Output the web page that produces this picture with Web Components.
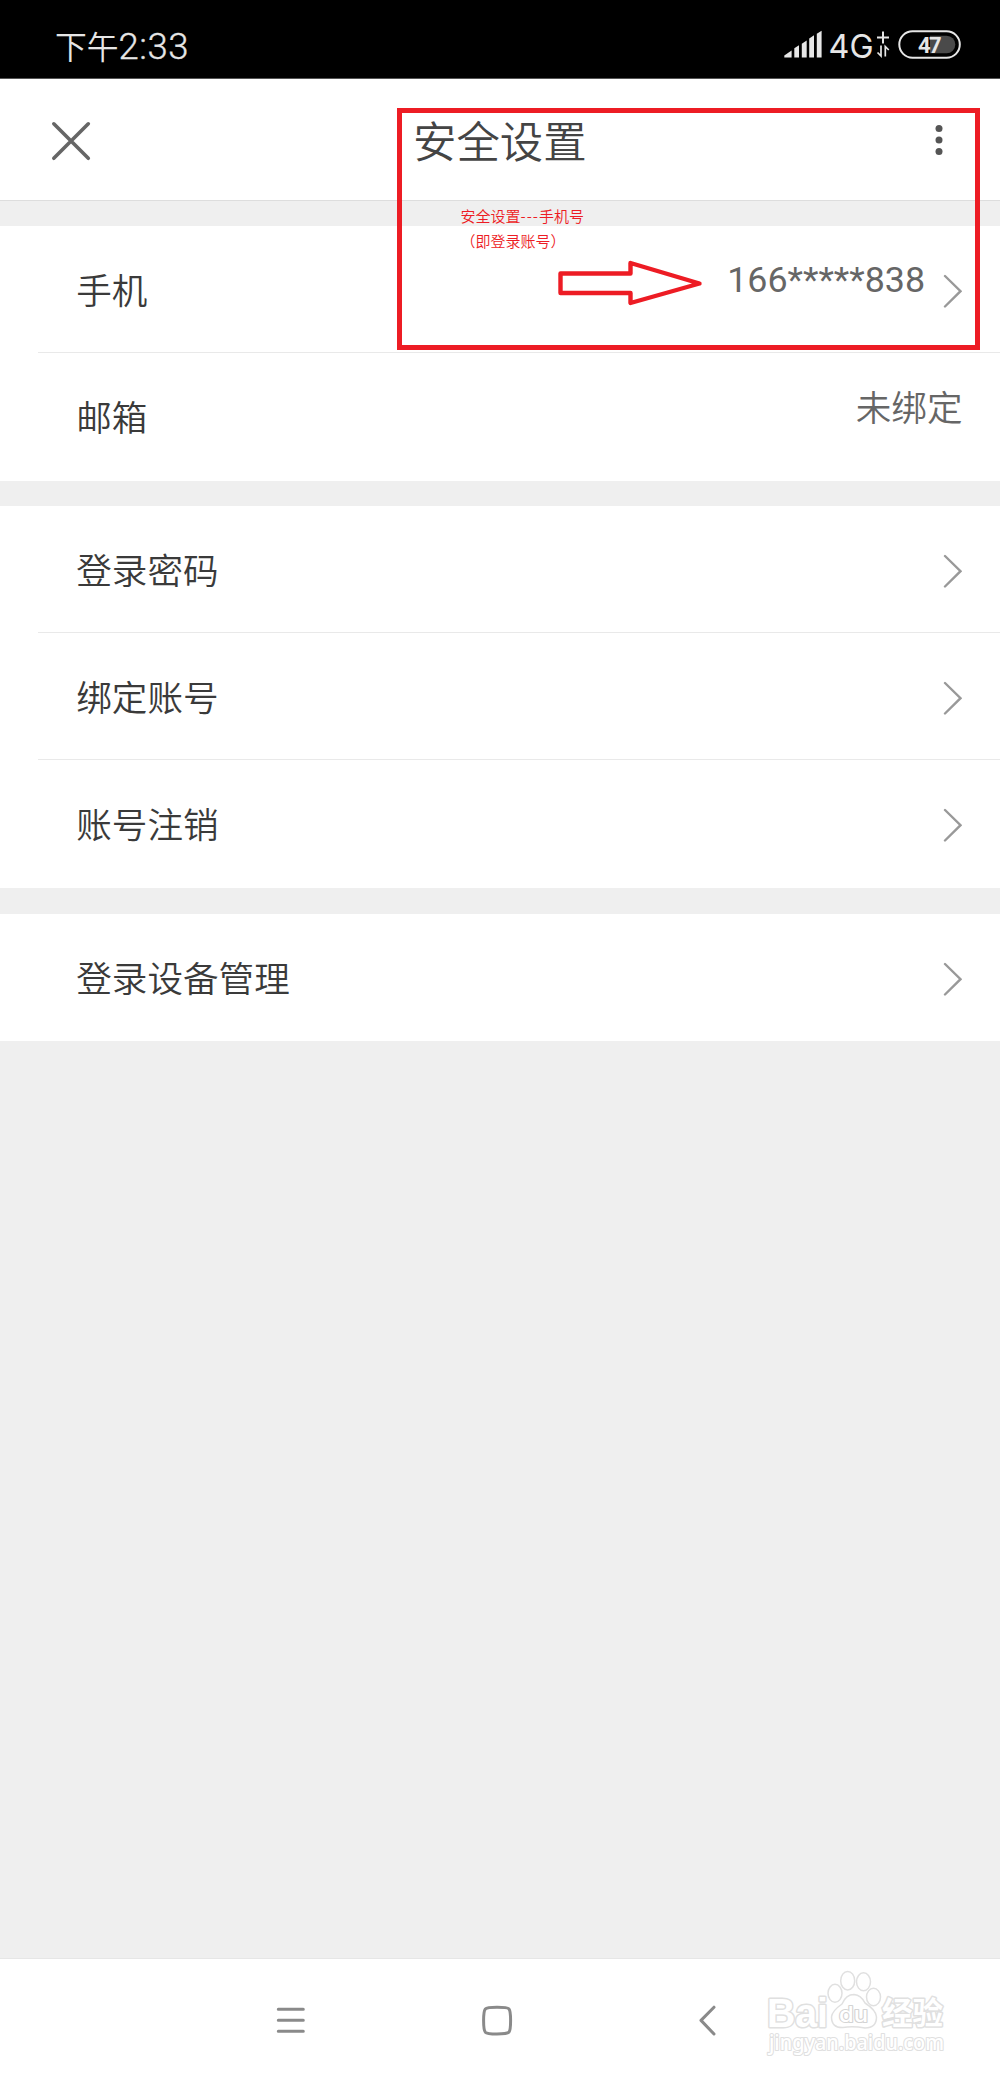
<!DOCTYPE html>
<html lang="zh-CN">
<head>
<meta charset="utf-8">
<title>安全设置</title>
<style>
html,body{margin:0;padding:0;width:1000px;height:2078px;overflow:hidden;background:#efefef}
body{font-family:Roboto,"Noto Sans CJK SC",sans-serif}
</style>
</head>
<body>
<settings-screen></settings-screen>
<script>
const define = (name, html) => {
  const t = document.createElement('template');
  t.innerHTML = html;
  customElements.define(name, class extends HTMLElement {
    constructor() {
      super();
      this.attachShadow({mode: 'open'}).appendChild(t.content.cloneNode(true));
    }
  });
};

define('status-bar', `
<style>
:host{display:flex;justify-content:space-between;background:#000;color:#e6e6e6;border-bottom:1px solid #555;box-sizing:border-box;height:79px}
.time{display:flex;align-items:baseline;padding:24px 0 0 55px;line-height:42px;height:42px}
.cjk{font-size:31.8px;font-family:"Noto Sans CJK SC",sans-serif;font-weight:350}
.num{font-size:36.5px;font-weight:300;letter-spacing:.5px;-webkit-text-stroke:.3px #e6e6e6}
svg{display:block}
</style>
<div class="time"><span class="cjk">下午</span><span class="num">2:33</span></div>
<svg width="260" height="78" viewBox="740 0 260 78">
  <g fill="#e6e6e6">
    <path d="M784.3 57.5V55.5L791.6 50.5V57.5Z"/>
    <path d="M794.3 57.5V48.3L799 45.3V57.5Z"/>
    <path d="M801.8 57.5V43.8L806.7 40.5V57.5Z"/>
    <path d="M809.2 57.5V38.5L814 35.3V57.5Z"/>
    <path d="M816.8 57.5V33.7L821.6 30.7V57.5Z"/>
    <text x="828.5" y="57.5" font-family="Inter" font-weight="400" font-size="33" textLength="45" lengthAdjust="spacingAndGlyphs">4G</text>
  </g>
  <g stroke="#e6e6e6" fill="none" stroke-width="2">
    <path d="M877 37.5H889M883 31.5V43.5"/>
    <path d="M881 45.5V56L877.5 52.5M885.3 56.5V46.5L888.8 50" stroke-width="1.7"/>
    <rect x="899.3" y="31.3" width="60.5" height="26.4" rx="13.2"/>
  </g>
  <path d="M930 35.8H946.6A8.7 8.7 0 0 1 946.6 53.2H930Z" fill="#4a4a4a"/>
  <text x="918" y="52.7" font-family="Roboto" font-weight="700" font-size="22" textLength="23.5" fill="#e6e6e6">47</text>
</svg>`);

define('app-header', `
<style>
:host{display:flex;justify-content:space-between;height:122px;background:#fff;border-bottom:1px solid #ddd;box-sizing:border-box;padding-left:50px}
svg{display:block}
.left{display:flex}
.title{margin-left:321px;padding-top:28px;font:350 43.4px/64px "Noto Sans CJK SC",sans-serif;color:#444}
</style>
<div class="left">
<svg width="42" height="121" viewBox="50 79 42 121"><path d="M53.8 123.8L88.3 158.3M88.3 123.8L53.8 158.3" stroke="#666" stroke-width="3.6" stroke-linecap="round"/></svg>
<div class="title"><slot></slot></div>
</div>
<svg width="80" height="121" viewBox="920 79 80 121" fill="#555"><circle cx="939" cy="128.5" r="3.5"/><circle cx="939" cy="140" r="3.5"/><circle cx="939" cy="151.5" r="3.5"/></svg>`);

define('settings-group', `
<style>:host{display:block;background:#fff;padding-bottom:1px;margin-bottom:25px}</style><slot></slot>`);

define('settings-row', `
<style>
:host{display:flex;height:127px;box-sizing:border-box;margin-left:38px;padding:2px 37.5px 0 38.3px;border-bottom:1px solid #e9e9e9;align-items:center;justify-content:space-between}
:host([last]){border-bottom-color:transparent}
.label{font:350 35.6px/52px "Noto Sans CJK SC",sans-serif;color:#3a3a3a;padding-bottom:2px}
.end{display:flex;align-items:center}
.value{font-size:35.6px;line-height:52px;font-weight:350;color:#666;padding-bottom:16px}
:host([arrow]) .value{font-size:35.8px;padding-bottom:20px;font-weight:400}
svg{display:none;margin:2px .5px 0 18px}
:host([arrow]) svg{display:block}
</style>
<span class="label"><slot></slot></span>
<span class="end"><span class="value"><slot name="value"></slot></span>
<svg width="19" height="34" viewBox="0 0 19 34" fill="none" stroke="#999" stroke-width="2.4" stroke-linecap="round"><path d="M2 2L17.5 17.2L2 32.5"/></svg></span>`);

define('nav-bar', `
<style>
:host{display:flex;height:120px;background:#fff;border-top:1px solid #e6e6e6;box-sizing:border-box}
svg{display:block}
</style>
<svg width="1000" height="119" viewBox="0 1959 1000 119" fill="none">
  <g stroke="#8a8a8a" stroke-width="3" stroke-linecap="round" stroke-linejoin="round">
    <path d="M278.3 2009.3H303.3M278.3 2020.3H303.3M278.3 2031.3H303.3"/>
    <path d="M497 2007.2Q508 2007.2 509 2009Q510.6 2011 510.6 2020.5Q510.6 2030 509 2032.2Q507 2034 497 2034Q487 2034 485.3 2032.2Q483.6 2030 483.6 2020.5Q483.6 2011 485.3 2009Q487 2007.2 497 2007.2Z"/>
    <path d="M714 2007.2L701 2020.4L714 2034"/>
  </g>
  <g stroke="#e0e0e0" stroke-width="1.5" fill="#fff">
    <ellipse cx="835" cy="1993.3" rx="7" ry="9"/><ellipse cx="847.7" cy="1980.7" rx="7" ry="9.3"/>
    <ellipse cx="863.5" cy="1981.8" rx="7" ry="9"/><ellipse cx="873.5" cy="1997" rx="7" ry="8.7"/>
    <path d="M854 1994.5Q861 1995 865 2003Q876 2010 876.5 2017Q876.5 2028 865 2028Q853 2026 843 2027.5Q831.5 2028 831.5 2017Q832 2011 842 2004Q846 1994.5 854 1994.5Z"/>
  </g>
  <g fill="#fff" stroke="#e0e0e0" stroke-width="3" paint-order="stroke" stroke-linejoin="round" font-weight="700">
    <text x="767" y="2026.5" font-family="Liberation Sans" font-size="40" textLength="61" lengthAdjust="spacingAndGlyphs">Bai</text>
    <text x="839" y="2022" font-family="Inter" font-weight="500" font-size="22" textLength="29" stroke="#d4d4d4" stroke-width="2.2" lengthAdjust="spacingAndGlyphs">du</text>
    <text x="882" y="2024" font-family="Noto Sans CJK SC" font-size="31" textLength="61" lengthAdjust="spacingAndGlyphs">经验</text>
    <text x="769" y="2050" font-family="Noto Sans" font-weight="500" stroke-width="2.2" font-size="21" textLength="175" lengthAdjust="spacingAndGlyphs">jingyan.baidu.com</text>
  </g>
</svg>`);

define('red-annotation', `
<style>
:host{position:absolute;left:397px;top:108px;width:583px;height:242px;box-sizing:border-box;border:5px solid #ed1c24}
p{margin:0;padding:89.5px 0 0 58.5px;font:350 15px/25px "Noto Sans CJK SC",sans-serif;color:#ed1c24}
p span{display:block;white-space:nowrap}
p i{font-style:normal;letter-spacing:1px}
p .b{font-family:"Noto Sans CJK TC",sans-serif;text-spacing-trim:space-all}
svg{display:block;margin:5px 0 0 154px}
</style>
<p><span>安全设置<i>---</i>手机号</span><span class="b" lang="zh-TW">（即登录账号）</span></p>
<svg width="150" height="48" viewBox="556 257 150 48"><path d="M560.5 272.5H630.5V262L699.5 282.5L630.5 302V292H560.5Z" fill="none" stroke="#ed1c24" stroke-width="4.4" stroke-linejoin="round"/></svg>`);

define('settings-screen', `
<style>
:host{display:flex;flex-direction:column;width:1000px;height:2078px;background:#efefef;position:relative}
app-header{margin-bottom:25px}
.mid{margin-bottom:26px}
.fill{flex:1}
</style>
<status-bar></status-bar>
<app-header>安全设置</app-header>
<settings-group>
  <settings-row arrow>手机<span slot="value">166*****838</span></settings-row>
  <settings-row last>邮箱<span slot="value">未绑定</span></settings-row>
</settings-group>
<settings-group class="mid">
  <settings-row arrow>登录密码</settings-row>
  <settings-row arrow>绑定账号</settings-row>
  <settings-row arrow last>账号注销</settings-row>
</settings-group>
<settings-group style="padding:0;margin:0"><settings-row arrow last>登录设备管理</settings-row></settings-group>
<div class="fill"></div>
<nav-bar></nav-bar>
<red-annotation></red-annotation>`);
</script>
</body>
</html>
